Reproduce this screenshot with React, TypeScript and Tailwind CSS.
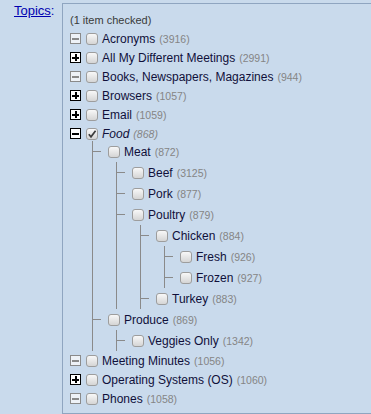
import React from "react";

type N = { t: string; c: number; kids?: N[] };

const food: N[] = [
  {
    t: "Meat",
    c: 872,
    kids: [
      { t: "Beef", c: 3125 },
      { t: "Pork", c: 877 },
      {
        t: "Poultry",
        c: 879,
        kids: [
          {
            t: "Chicken",
            c: 884,
            kids: [
              { t: "Fresh", c: 926 },
              { t: "Frozen", c: 927 },
            ],
          },
          { t: "Turkey", c: 883 },
        ],
      },
    ],
  },
  { t: "Produce", c: 869, kids: [{ t: "Veggies Only", c: 1342 }] },
];

type Kind = "plus" | "minus" | "leaf";

function Expander({ kind }: { kind: Kind }) {
  const stroke = kind === "leaf" ? "#8a8a8a" : "#000000";
  const fill = kind === "leaf" ? "#eef2f7" : "#ffffff";
  return (
    <svg width="11" height="11" viewBox="0 0 11 11" className="shrink-0 block" shapeRendering="crispEdges">
      <rect x="0.5" y="0.5" width="10" height="10" fill={fill} stroke={stroke} />
      <rect x="2" y="4.5" width="7" height="2" fill={stroke} />
      {kind === "plus" && <rect x="4.5" y="2" width="2" height="7" fill={stroke} />}
    </svg>
  );
}

function Check({ checked }: { checked?: boolean }) {
  return (
    <span className="w-[12px] h-[12px] shrink-0 rounded-[3px] border border-[#9d9d9d] bg-linear-to-b from-[#f8f8f8] to-[#d5d5d5] flex items-center justify-center">
      {checked && (
        <svg width="10" height="10" viewBox="0 0 10 10" className="block">
          <path d="M1.8 5.2 L4 7.8 L8.6 1.8" fill="none" stroke="#3c3c3c" strokeWidth="1.7" />
        </svg>
      )}
    </span>
  );
}

function Label({ t, c, italic }: { t: string; c: number; italic?: boolean }) {
  return (
    <span className={italic ? "ml-[4px] text-[12px] text-[#10103a] whitespace-nowrap italic" : "ml-[4px] text-[12px] text-[#10103a] whitespace-nowrap"}>
      {t}
      <span className="ml-[4px] text-[10.5px] text-[#858585]">({c})</span>
    </span>
  );
}

function Nested({ n }: { n: N }) {
  return (
    <li>
      <div className="flex items-center h-[21px]">
        <span className="w-[8px] h-px bg-[#8a8a8a] shrink-0" />
        <span className="w-[7px] shrink-0" />
        <Check />
        <Label t={n.t} c={n.c} />
      </div>
      {n.kids && (
        <ul className="ml-[23px] border-l border-[#8a8a8a]">
          {n.kids.map((k) => (
            <Nested key={k.t} n={k} />
          ))}
        </ul>
      )}
    </li>
  );
}

function Top({ kind, t, c, checked, italic, children }: { kind: Kind; t: string; c: number; checked?: boolean; italic?: boolean; children?: React.ReactNode }) {
  return (
    <li>
      <div className="flex items-center h-[19px]">
        <Expander kind={kind} />
        <span className="w-[5px] shrink-0" />
        <Check checked={checked} />
        <Label t={t} c={c} italic={italic} />
      </div>
      {children}
    </li>
  );
}

export default function App() {
  return (
    <div className="w-[371px] h-[414px] overflow-hidden bg-[#c9daec] flex font-['Liberation_Sans',Arial,sans-serif]">
      <div className="w-[62px] shrink-0 pl-[14px] pt-[3px] text-[13px] leading-[15px] text-[#0000b0]">
        <a href="#" className="underline text-[#0000b0]">Topics</a>
        <span>:</span>
      </div>
      <div className="mt-[3px] w-[340px] shrink-0 border border-[#8fa5c0] pl-[7px] pt-[10px] pb-[30px]">
        <div className="text-[11px] leading-[13px] h-[13px] text-[#3a3a3a] whitespace-nowrap">(1 item checked)</div>
        <ul className="mt-[2px]">
          <Top kind="leaf" t="Acronyms" c={3916} />
          <Top kind="plus" t="All My Different Meetings" c={2991} />
          <Top kind="leaf" t="Books, Newspapers, Magazines" c={944} />
          <Top kind="plus" t="Browsers" c={1057} />
          <Top kind="plus" t="Email" c={1059} />
          <Top kind="minus" t="Food" c={868} checked italic>
            <ul className="ml-[22px] -mt-[2px] border-l border-[#8a8a8a]">
              {food.map((k) => (
                <Nested key={k.t} n={k} />
              ))}
            </ul>
          </Top>
          <Top kind="leaf" t="Meeting Minutes" c={1056} />
          <Top kind="plus" t="Operating Systems (OS)" c={1060} />
          <Top kind="leaf" t="Phones" c={1058} />
        </ul>
      </div>
    </div>
  );
}
